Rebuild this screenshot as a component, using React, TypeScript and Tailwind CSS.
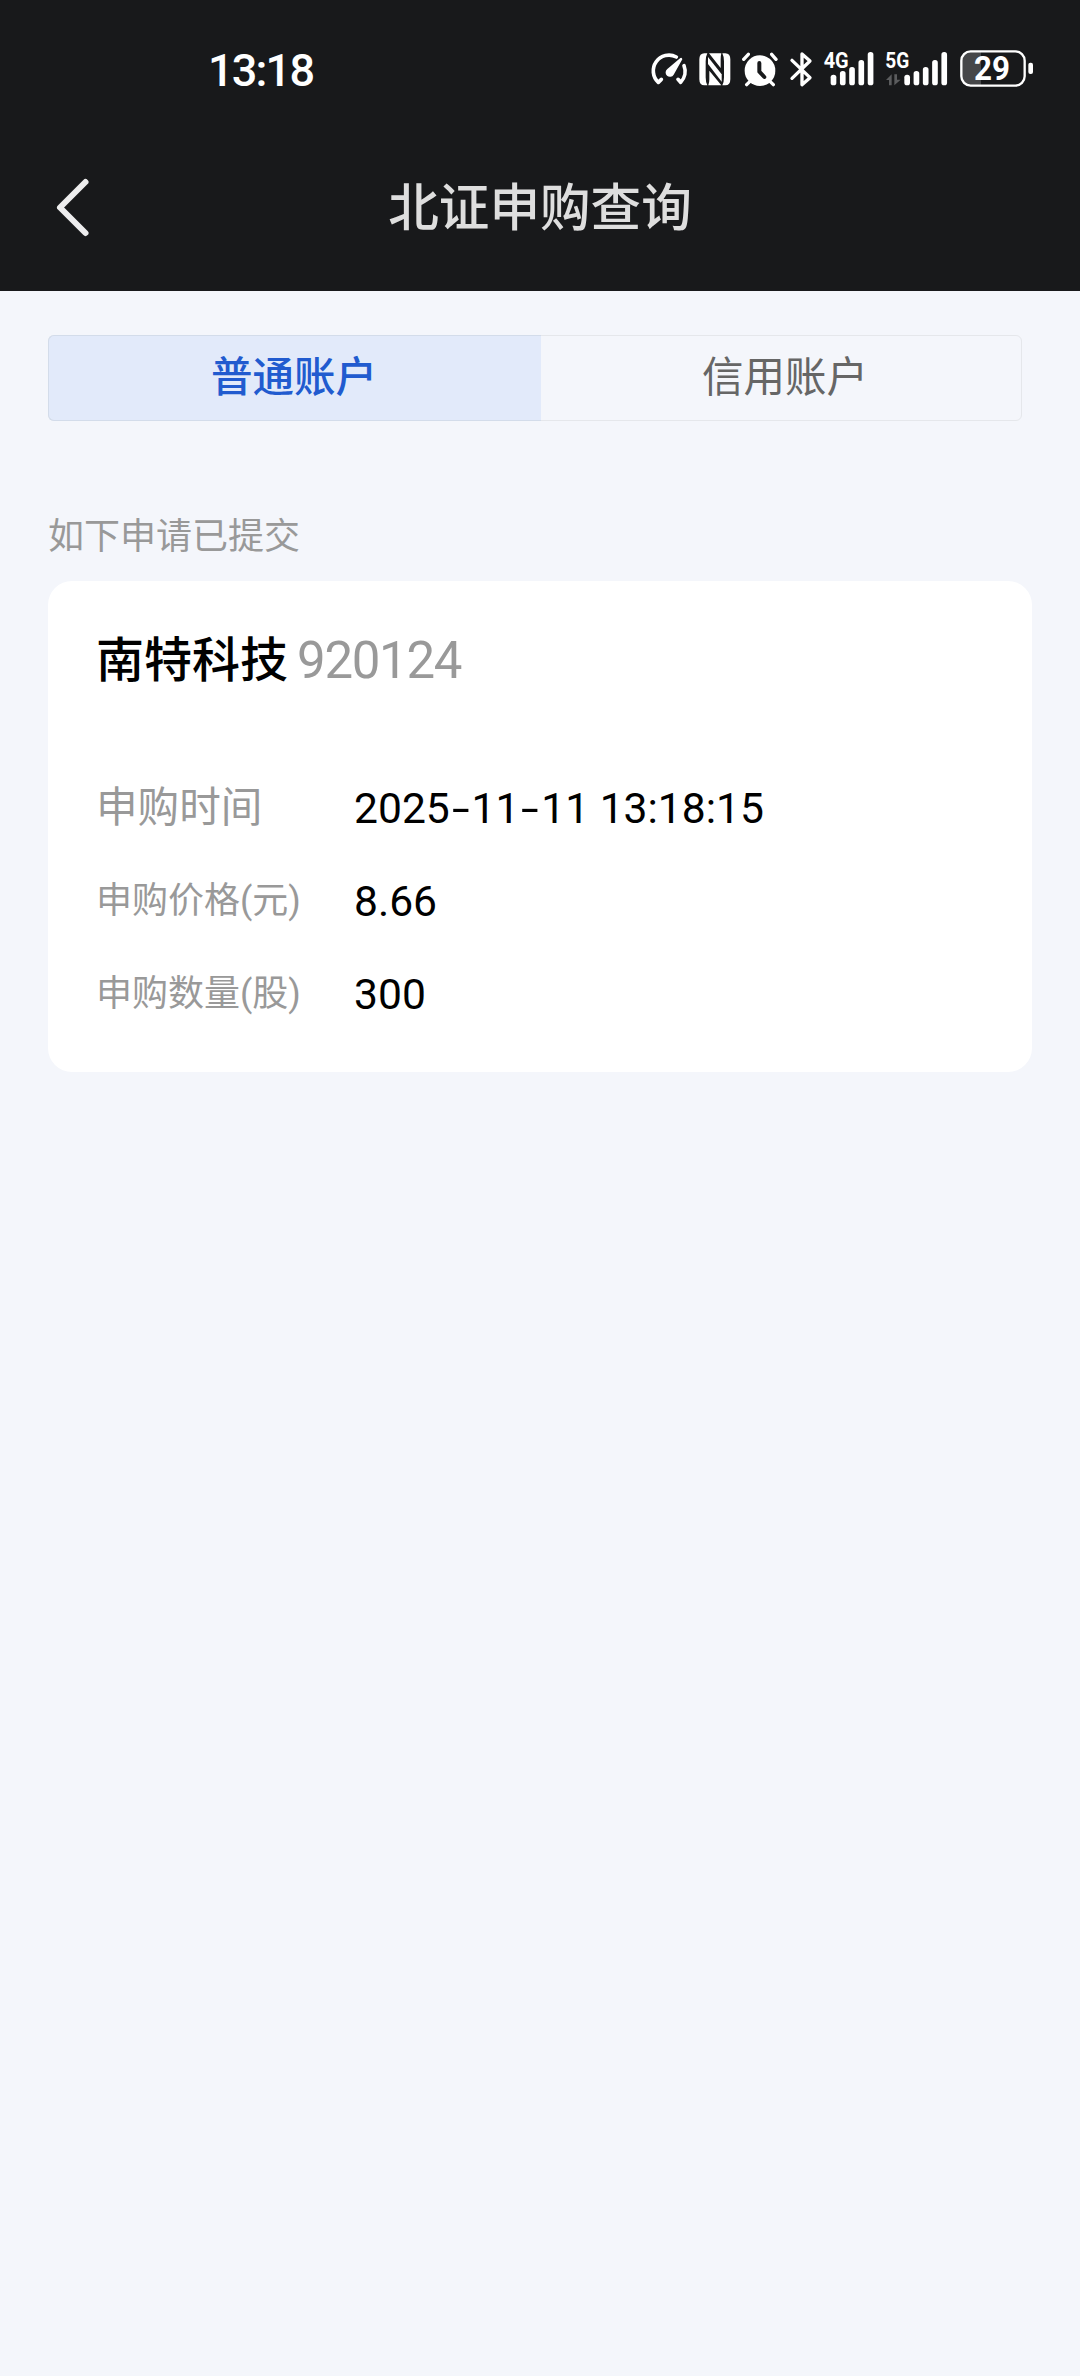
const rows = [
  { label: "申购时间", value: "2025-11-11 13:18:15", large: true },
  { label: "申购价格(元)", value: "8.66", large: false },
  { label: "申购数量(股)", value: "300", large: false },
];

function GaugeIcon() {
  return (
    <svg width="40" height="40" viewBox="30 30 120 120" fill="none">
      <g stroke="#fff" strokeWidth="11" strokeLinecap="round" strokeLinejoin="round">
        <path d="M109 51A47 47 0 0 0 55 127L64 118" />
        <path d="M132 77A47 47 0 0 1 122 127L114 118" />
      </g>
      <path d="M121 54Q126 51 127 58L101 104A13 13 0 1 1 82 87Z" fill="#fff" />
    </svg>
  );
}

function NfcIcon() {
  return (
    <svg width="34" height="40" viewBox="173 30 102 120" fill="none">
      <path
        d="M201 40H192Q177 40 177 58V118Q177 136 192 136H201Q196 126 196 112V64Q196 50 201 40Z"
        fill="#fff"
      />
      <path
        d="M246 40H255Q270 40 270 58V118Q270 136 255 136H246Q251 126 251 112V64Q251 50 246 40Z"
        fill="#fff"
      />
      <path d="M206 40L241 84V58Q241 48 243 40Z" fill="#fff" />
      <path d="M243 136L207 92V118Q207 128 204 136Z" fill="#fff" />
      <path d="M203 51V72L244 125V103Z" fill="#fff" />
    </svg>
  );
}

function AlarmIcon() {
  return (
    <svg width="40" height="40" viewBox="300 30 120 120" fill="none">
      <circle cx="360" cy="92" r="46" fill="#fff" />
      <g stroke="#fff" strokeWidth="10" strokeLinecap="round">
        <path d="M311 58L325 43M395 43L408 58M320 134L330 124M400 134L390 124" />
      </g>
      <path
        d="M358 69V95L373 111"
        stroke="#18191b"
        strokeWidth="12"
        strokeLinecap="round"
        strokeLinejoin="round"
      />
    </svg>
  );
}

function BluetoothIcon() {
  return (
    <svg width="26" height="40" viewBox="443 30 78 120" fill="none">
      <path
        d="M455 61L509 113L485 134V42L509 63L455 115"
        stroke="#fff"
        strokeWidth="10"
        strokeLinecap="round"
        strokeLinejoin="round"
      />
    </svg>
  );
}

function SignalBars({ start }: { start: number }) {
  const tops = [104, 93, 81, 60, 36];
  return (
    <>
      {tops.map((top, i) => (
        <rect
          key={top}
          x={start + i * 27.8}
          y={top}
          width="17"
          height={136 - top}
          rx="8"
          fill="#fff"
        />
      ))}
    </>
  );
}

function Signal4G() {
  return (
    <svg className="overflow-visible" width="52" height="50" viewBox="40 0 156 150">
      <text
        x="42"
        y="83"
        fill="#fff"
        fontSize="65"
        fontWeight="700"
        textLength="75"
        lengthAdjust="spacingAndGlyphs"
      >
        4G
      </text>
      <SignalBars start={63} />
    </svg>
  );
}

function Signal5G() {
  return (
    <svg className="overflow-visible" width="64" height="50" viewBox="226 0 192 150">
      <text
        x="227"
        y="83"
        fill="#fff"
        fontSize="65"
        fontWeight="700"
        textLength="72"
        lengthAdjust="spacingAndGlyphs"
      >
        5G
      </text>
      <path d="M246 103V136H238V120H229Z" fill="#5b5c5e" />
      <path d="M254 103V136L273 119H262V103Z" fill="#5b5c5e" />
      <SignalBars start={284} />
    </svg>
  );
}

function Battery() {
  return (
    <svg width="76" height="40" viewBox="447 30 228 120">
      <path d="M513 36H482Q456 36 456 62V109Q456 135 482 135H513Z" fill="#464749" />
      <rect
        x="454"
        y="34"
        width="190"
        height="103"
        rx="28"
        fill="none"
        stroke="#fff"
        strokeWidth="7"
      />
      <rect x="655" y="68" width="14" height="34" rx="6" fill="#fff" />
      <text
        x="492"
        y="120"
        fill="#fff"
        fontSize="97"
        fontWeight="700"
        textLength="108"
        lengthAdjust="spacingAndGlyphs"
      >
        29
      </text>
    </svg>
  );
}

function StatusBar() {
  return (
    <div className="flex h-[126px] items-start justify-between pt-10 pr-[45px] pl-[208px]">
      <span className="pt-[11px] text-[45px] leading-[40px] font-medium tracking-[-1.8px] text-white">
        13:18
      </span>
      <div className="flex items-end">
        <GaugeIcon />
        <div className="ml-[7.67px]">
          <NfcIcon />
        </div>
        <div className="ml-[8.33px]">
          <AlarmIcon />
        </div>
        <div className="ml-[7.67px]">
          <BluetoothIcon />
        </div>
        <div className="ml-[9.67px]">
          <Signal4G />
        </div>
        <div className="ml-[10px]">
          <Signal5G />
        </div>
        <div className="ml-[9.67px]">
          <Battery />
        </div>
      </div>
    </div>
  );
}

function NavBar() {
  return (
    <div className="grid h-[165px] grid-cols-[1fr_auto_1fr] items-start pt-[50px]">
      <button className="ml-[54px] w-10" aria-label="返回">
        <svg width="40" height="64" viewBox="0 0 40 64" fill="none">
          <path
            d="M31.5 6L6 31.5L31.5 57"
            stroke="#ededee"
            strokeWidth="6"
            strokeLinecap="round"
            strokeLinejoin="round"
          />
        </svg>
      </button>
      <h1 className="pt-0.5 text-[50.6px] leading-[62px] font-medium text-[#dedede]">
        北证申购查询
      </h1>
    </div>
  );
}

// hyphens are stretched to sit evenly between the digits
function Value({ text }: { text: string }) {
  return text.split(/(-)/).map((part, i) =>
    part === "-" ? (
      <span key={i} className="mx-[5px] inline-block scale-x-150">
        -
      </span>
    ) : (
      part
    )
  );
}

export default function App() {
  return (
    <div className="min-h-[2376px] w-[1080px] bg-[#f4f6fb] font-[Roboto,'Noto_Sans_CJK_SC',sans-serif]">
      <header className="bg-[#18191b]">
        <StatusBar />
        <NavBar />
      </header>
      <main className="px-12 pt-11">
        <div className="flex h-[86px] w-[974px] rounded-md border border-[#e5e7eb] text-[41.5px] leading-[82px]">
          <button className="-m-px w-[493px] shrink-0 rounded-l-md border border-r-0 border-[#d3dcea] bg-[#e2eafa] pr-0.5 font-medium text-[#215bcf]">
            普通账户
          </button>
          <button className="flex-1 pl-[9px] text-[#666]">信用账户</button>
        </div>
        <p className="mt-[86px] text-[36px] leading-[60px] text-[#999]">如下申请已提交</p>
        <section className="mt-3.5 h-[491px] rounded-3xl bg-white px-12 pt-[49px]">
          <div className="flex items-center leading-[62px]">
            <h2 className="text-[48px] font-medium text-black">南特科技</h2>
            <span className="ml-[9px] text-[51px] tracking-[-1.3px] text-[#999]">920124</span>
          </div>
          <dl className="mt-[85px]">
            {rows.map((row) => (
              <div key={row.label} className="flex h-[93px] items-start leading-[60px]">
                <dt
                  className={
                    row.large
                      ? "w-[258px] pt-px text-[41.6px] text-[#999]"
                      : "w-[258px] pt-px text-[36px] text-[#999]"
                  }
                >
                  {row.label}
                </dt>
                <dd className="pt-px text-[42.6px] text-black">
                  <Value text={row.value} />
                </dd>
              </div>
            ))}
          </dl>
        </section>
      </main>
    </div>
  );
}
